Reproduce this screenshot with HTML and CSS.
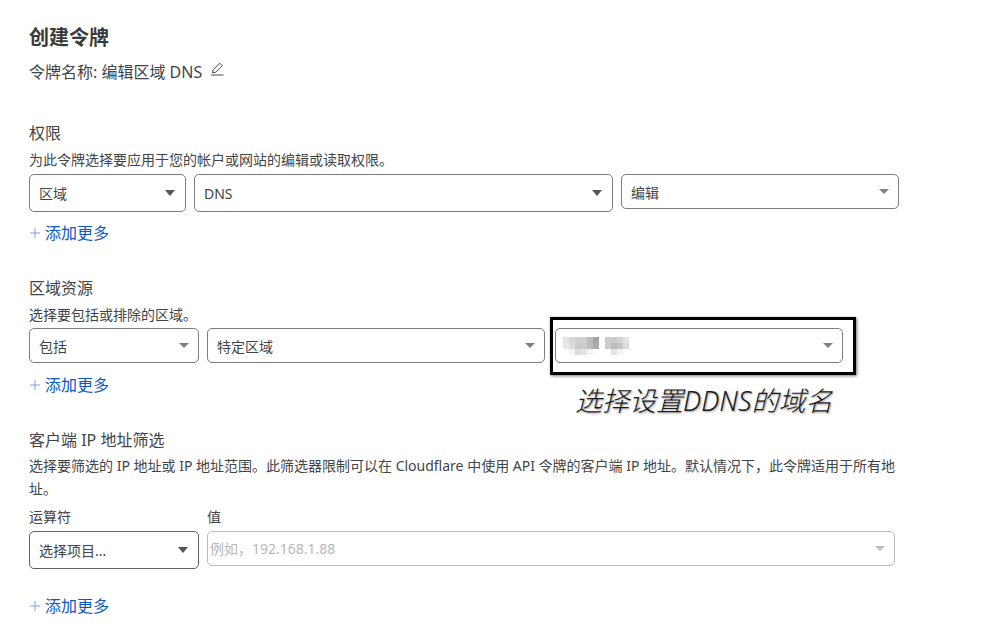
FILE: index.html
```html
<!DOCTYPE html>
<html lang="zh-CN">
<head>
<meta charset="utf-8">
<title>创建令牌</title>
<link rel="stylesheet" href="styles.css">
</head>
<body>
<main class="page">
  <h1 class="title">创建令牌</h1>
  <div class="token-name">
    <span>令牌名称: 编辑区域 DNS</span>
    <svg class="edit" width="13" height="14" viewBox="0 0 13 14" fill="none" stroke="#4a4a4a" stroke-width="1"><path d="M0 13h12.500M1.500 10.800l.6-3L8.700 1.200l2.500 2.500-6.600 6.600z"/></svg>
  </div>

  <section class="sec-perm">
    <h2 class="heading">权限</h2>
    <p class="desc">为此令牌选择要应用于您的帐户或网站的编辑或读取权限。</p>
    <div class="row row-perm">
      <div class="select tall w157"><span>区域</span><i class="caret dark"></i></div>
      <div class="select tall w419"><span>DNS</span><i class="caret dark"></i></div>
      <div class="select w278"><span>编辑</span><i class="caret"></i></div>
    </div>
    <a class="add"><svg class="plus" width="10" height="10" viewBox="0 0 10 10" stroke="#7aa5dc" stroke-width="1"><path d="M0 5h10M5 0v10"/></svg>添加更多</a>
  </section>

  <section class="sec-zone">
    <h2 class="heading">区域资源</h2>
    <p class="desc">选择要包括或排除的区域。</p>
    <div class="row zone-row">
      <div class="select w170"><span>包括</span><i class="caret"></i></div>
      <div class="select w341"><span>特定区域</span><i class="caret"></i></div>
      <div class="select w288">
        <svg class="mosaic" width="66" height="18" viewBox="0 0 11 3" shape-rendering="crispEdges">
          <rect x="0" y="0" width="1" height="1" fill="#e4e4e4"/><rect x="1" y="0" width="1" height="1" fill="#d8d8d8"/><rect x="2" y="0" width="2" height="1" fill="#d0d0d0"/><rect x="4" y="0" width="1" height="1" fill="#bcbcbc"/><rect x="5" y="0" width="1" height="1" fill="#a4a4a4"/><rect x="7" y="0" width="2" height="1" fill="#cccccc"/><rect x="9" y="0" width="1" height="1" fill="#d4d4d4"/><rect x="10" y="0" width="1" height="1" fill="#e4e4e4"/>
          <rect x="0" y="1" width="1" height="1" fill="#e8e8e8"/><rect x="1" y="1" width="1" height="1" fill="#dcdcdc"/><rect x="2" y="1" width="2" height="1" fill="#cccccc"/><rect x="4" y="1" width="1" height="1" fill="#bcbcbc"/><rect x="5" y="1" width="1" height="1" fill="#acacac"/><rect x="7" y="1" width="1" height="1" fill="#cccccc"/><rect x="8" y="1" width="1" height="1" fill="#bcbcbc"/><rect x="9" y="1" width="1" height="1" fill="#c4c4c4"/><rect x="10" y="1" width="1" height="1" fill="#dcdcdc"/>
          <rect x="1" y="2" width="1" height="1" fill="#f4f4f4"/><rect x="2" y="2" width="1" height="1" fill="#dcdcdc"/><rect x="3" y="2" width="1" height="1" fill="#e4e4e4"/><rect x="4" y="2" width="1" height="1" fill="#f4f4f4"/><rect x="8" y="2" width="1" height="1" fill="#e4e4e4"/><rect x="9" y="2" width="1" height="1" fill="#f4f4f4"/>
        </svg>
        <i class="caret"></i>
      </div>
      <div class="callout" aria-hidden="true"></div>
      <div class="note">选择设置DDNS的域名</div>
    </div>
    <a class="add add-zone"><svg class="plus" width="10" height="10" viewBox="0 0 10 10" stroke="#7aa5dc" stroke-width="1"><path d="M0 5h10M5 0v10"/></svg>添加更多</a>
  </section>

  <section class="sec-ip">
    <h2 class="heading">客户端 IP 地址筛选</h2>
    <p class="desc wrap">选择要筛选的 IP 地址或 IP 地址范围。此筛选器限制可以在 Cloudflare 中使用 API 令牌的客户端 IP 地址。默认情况下，此令牌适用于所有地址。</p>
    <div class="row labels">
      <label class="label w170">运算符</label>
      <label class="label">值</label>
    </div>
    <div class="row row-ip">
      <div class="select tall w170 strong"><span>选择项目...</span><i class="caret dark"></i></div>
      <div class="select w688 disabled"><span class="placeholder">例如，192.168.1.88</span><i class="caret faint"></i></div>
    </div>
    <a class="add add-last"><svg class="plus" width="10" height="10" viewBox="0 0 10 10" stroke="#7aa5dc" stroke-width="1"><path d="M0 5h10M5 0v10"/></svg>添加更多</a>
  </section>
</main>
</body>
</html>
```
FILE: styles.css
```css
* { box-sizing: border-box; }
html, body { margin: 0; padding: 0; background: #fff; }
body {
  font-family: "Noto Sans", "Noto Sans CJK SC", sans-serif;
  color: #424446;
  overflow: hidden;
}
.page { padding: 23px 0 0 29px; width: 991px; height: 632px; }
.title { margin: 0; font-size: 20px; line-height: 30px; font-weight: 600; color: #3a3a3a; }
.token-name { display: flex; align-items: flex-start; gap: 10px; margin-top: 7px; font-size: 16px; line-height: 24px; color: #424446; }
.edit { margin-top: 2px; margin-left: -1px; }
.sec-perm { margin-top: 37px; }
.sec-zone { margin-top: 31px; }
.sec-ip { margin-top: 31px; }
.heading { margin: 0; font-size: 16px; line-height: 24px; font-weight: 400; color: #424446; }
.desc { margin: 4px 0 0; font-size: 14px; line-height: 21px; height: 21px; color: #424446; }
.desc.wrap { width: 870px; height: auto; line-height: 23px; margin-top: 2px; }
.row { display: flex; align-items: flex-start; gap: 8px; position: relative; }
.row-perm { margin-top: 4px; }
.zone-row { margin-top: 3px; }
.row-ip { margin-top: 4px; }
.labels { margin-top: 6px; font-size: 14px; line-height: 21px; }
.label { display: block; }
.labels .w170 { width: 170px; flex: none; }
.select {
  flex: none;
  display: flex;
  align-items: center;
  justify-content: space-between;
  height: 35px;
  padding: 0 9px 0 9px;
  border: 1px solid #7d7d7d;
  border-radius: 5px;
  background: #fff;
  font-size: 14px;
  color: #424446;
}
.select.tall { height: 38px; padding-right: 10px; }
.select.strong { border-color: #616161; }
.w157 { width: 157px; }
.w419 { width: 419px; }
.w278 { width: 278px; }
.w170 { width: 170px; }
.w341 { width: 338px; }
.w288 { width: 288px; margin-left: 2px; }
.w688 { width: 688px; }
.caret { width: 0; height: 0; border-left: 5px solid transparent; border-right: 5px solid transparent; border-top: 5px solid #808080; }
.caret.dark { border-top: 6px solid #555; }
.caret.faint { border-top-color: #bdbdbd; }
.disabled { border-color: #bdbdbd; color: #b8b8b8; padding-left: 2px; }
.placeholder { position: relative; top: -1px; }
.add { display: flex; align-items: center; gap: 5px; margin-top: 9px; padding-left: 1px; font-size: 16px; line-height: 24px; color: #0b57c5; }
.add-zone { margin-top: 10px; }
.add-last { margin-top: 25px; }
.plus { flex: none; }
.mosaic { display: block; margin-left: -2px; }
.callout {
  position: absolute;
  left: 521px;
  top: -11px;
  width: 306px;
  height: 58px;
  border: 3px solid #000;
  box-shadow: 1px 1px 3px rgba(0, 0, 0, .55);
  pointer-events: none;
}
.note {
  position: absolute;
  left: 546px;
  top: 54px;
  font-size: 27px;
  line-height: 38px;
  font-weight: 300;
  font-style: italic;
  color: #1c1c1c;
  white-space: nowrap;
  text-shadow: 1px 1px 2px rgba(0, 0, 0, .4);
}
```
